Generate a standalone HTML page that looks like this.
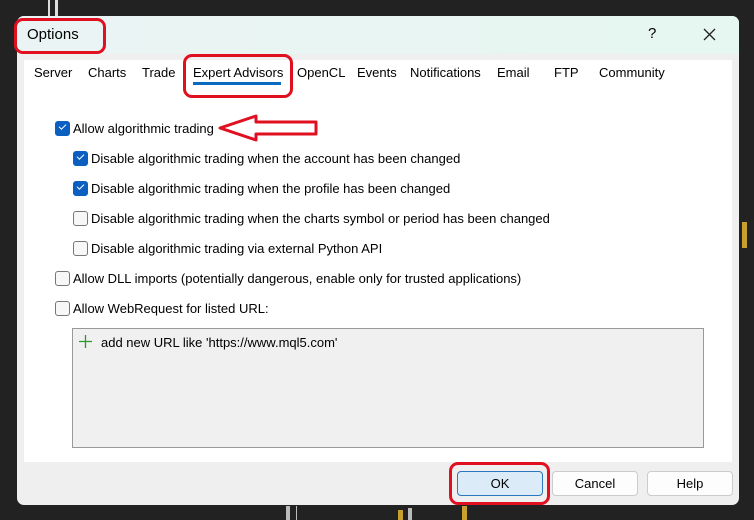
<!DOCTYPE html>
<html><head><style>
body{margin:0;width:754px;height:520px;background:#222;position:relative;overflow:hidden;font-family:"Liberation Sans",sans-serif;font-size:13px;color:#000}
.dlg{position:absolute;left:17px;top:16px;width:722px;height:489px;background:#efefef;border-radius:7px;overflow:hidden}
.title{position:absolute;left:0;top:0;width:722px;height:38px;background:linear-gradient(90deg,#eaf4f4,#e6f6f0)}
.content{position:absolute;left:7px;top:44px;width:708px;height:402px;background:#fff}
.t{position:absolute;white-space:nowrap}
.cb{position:absolute;width:13px;height:13px;border:1px solid #777;border-radius:3px;background:#f7f7f7}
.cb.on{background:#0a5fc0;border-color:#0a5fc0}
.cb.on::after{content:"";position:absolute;left:3px;top:2px;width:6px;height:3px;border-left:1.5px solid #fff;border-bottom:1.5px solid #fff;transform:rotate(-45deg)}
.red{position:absolute;border:3px solid #e01020;border-radius:9px}
.btn{position:absolute;top:455px;height:23px;border:1px solid #ccc;border-radius:4px;background:#fdfdfd;text-align:center;line-height:23px}
</style></head><body>
<div style="position:absolute;left:48px;top:0;width:2px;height:16px;background:#ddd"></div>
<div style="position:absolute;left:55px;top:0;width:3px;height:16px;background:#ddd"></div>
<div style="position:absolute;left:742px;top:222px;width:5px;height:26px;background:#c8a030"></div>
<div style="position:absolute;left:286px;top:506px;width:4px;height:14px;background:#bbb"></div>
<div style="position:absolute;left:296px;top:506px;width:1px;height:14px;background:#bbb"></div>
<div style="position:absolute;left:398px;top:510px;width:5px;height:10px;background:#c8a030"></div>
<div style="position:absolute;left:408px;top:508px;width:4px;height:12px;background:#bbb"></div>
<div style="position:absolute;left:462px;top:506px;width:5px;height:14px;background:#c8a030"></div>
<div class="dlg">
<div class="title"></div>
<div class="t" style="left:10px;top:10px;font-size:15px">Options</div>
<div class="t" style="left:631px;top:9px;font-size:15px">?</div>
<svg style="position:absolute;left:686px;top:12px" width="13" height="13"><path d="M1 1L12 12M12 1L1 12" stroke="#222" stroke-width="1.3"/></svg>
<div class="content"></div>
<div class="t" style="left:17px;top:49px">Server</div>
<div class="t" style="left:71px;top:49px">Charts</div>
<div class="t" style="left:125px;top:49px">Trade</div>
<div class="t" style="left:176px;top:49px">Expert Advisors</div>
<div style="position:absolute;left:176px;top:66px;width:88px;height:3px;background:#0a6cc0"></div>
<div class="t" style="left:280px;top:49px">OpenCL</div>
<div class="t" style="left:340px;top:49px">Events</div>
<div class="t" style="left:393px;top:49px">Notifications</div>
<div class="t" style="left:480px;top:49px">Email</div>
<div class="t" style="left:537px;top:49px">FTP</div>
<div class="t" style="left:582px;top:49px">Community</div>
<div class="cb on" style="left:38px;top:105px"></div><div class="t" style="left:56px;top:105px">Allow algorithmic trading</div>
<div class="cb on" style="left:56px;top:135px"></div><div class="t" style="left:74px;top:135px">Disable algorithmic trading when the account has been changed</div>
<div class="cb on" style="left:56px;top:165px"></div><div class="t" style="left:74px;top:165px">Disable algorithmic trading when the profile has been changed</div>
<div class="cb" style="left:56px;top:195px"></div><div class="t" style="left:74px;top:195px">Disable algorithmic trading when the charts symbol or period has been changed</div>
<div class="cb" style="left:56px;top:225px"></div><div class="t" style="left:74px;top:225px">Disable algorithmic trading via external Python API</div>
<div class="cb" style="left:38px;top:255px"></div><div class="t" style="left:56px;top:255px">Allow DLL imports (potentially dangerous, enable only for trusted applications)</div>
<div class="cb" style="left:38px;top:285px"></div><div class="t" style="left:56px;top:285px">Allow WebRequest for listed URL:</div>
<div style="position:absolute;left:55px;top:312px;width:630px;height:118px;background:#f0f0f0;border:1px solid #999"></div>
<svg style="position:absolute;left:62px;top:319px" width="13" height="13"><path d="M6.5 0V13M0 6.5H13" stroke="#2a9a2a" stroke-width="1.3"/></svg>
<div class="t" style="left:84px;top:319px">add new URL like 'https://www.mql5.com'</div>
<div class="btn" style="left:440px;width:84px;background:#dcebf8;border-color:#2a78c0">OK</div>
<div class="btn" style="left:535px;width:84px">Cancel</div>
<div class="btn" style="left:630px;width:84px">Help</div>
</div>
<div class="red" style="left:14px;top:18px;width:86px;height:30px"></div>
<div class="red" style="left:183px;top:54px;width:104px;height:38px"></div>
<div class="red" style="left:449px;top:462px;width:95px;height:37px"></div>
<svg style="position:absolute;left:216px;top:113px" width="106" height="30"><path d="M4 15 L40 3 L40 9 L100 9 L100 21 L40 21 L40 27 Z" fill="none" stroke="#e01020" stroke-width="3" stroke-linejoin="round"/></svg>
</body></html>
